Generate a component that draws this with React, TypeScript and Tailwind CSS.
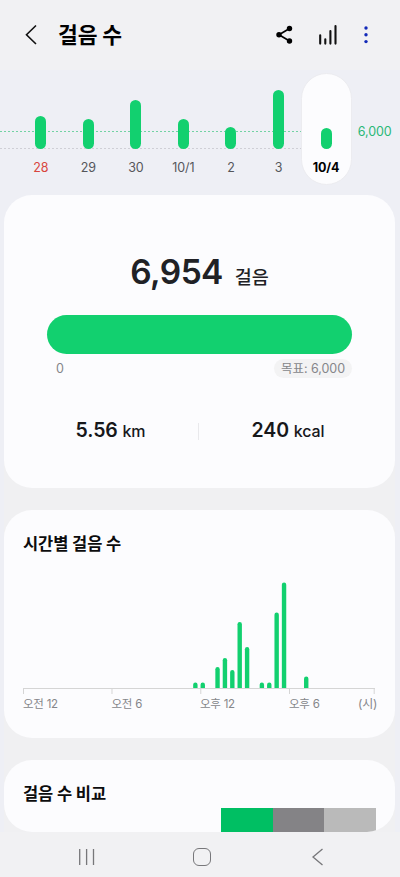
import clsx from "clsx";

const days = [
  { label: "28", height: 33, sunday: true },
  { label: "29", height: 30 },
  { label: "30", height: 49 },
  { label: "10/1", height: 30 },
  { label: "2", height: 22 },
  { label: "3", height: 59 },
  { label: "10/4", height: 21, selected: true },
];

// half-hour slots of the day
const slots = [
  { slot: 23, height: 5.5 },
  { slot: 24, height: 5.5 },
  { slot: 26, height: 21 },
  { slot: 27, height: 30 },
  { slot: 28, height: 18 },
  { slot: 29, height: 66 },
  { slot: 30, height: 41 },
  { slot: 32, height: 5.5 },
  { slot: 33, height: 5.5 },
  { slot: 34, height: 75.5 },
  { slot: 35, height: 105.5 },
  { slot: 38, height: 11.5 },
];

const ticks = [0.5, 89, 177.8, 266.5, 351.2];

function Header() {
  return (
    <header className="flex h-[70px] items-center bg-[#f1f1f3] pr-[31px] pl-[24px]">
      <svg width="14" height="22" viewBox="0 0 14 22" fill="none" stroke="#111" strokeWidth="1.6">
        <path d="M12 1.5 2.5 10.7 12 20" />
      </svg>
      <h1 className="mt-px ml-[20px] text-[21.5px] leading-none font-bold tracking-[-0.1px] text-black">
        걸음 수
      </h1>
      <div className="ml-auto flex items-center">
        <svg width="18" height="20" viewBox="0 0 18 20" fill="#000">
          <path d="M14.5 3.5 4 9.8l10.5 6.2" fill="none" stroke="#000" strokeWidth="1.7" />
          <circle cx="14.5" cy="3.5" r="2.7" />
          <circle cx="4" cy="9.8" r="2.7" />
          <circle cx="14.5" cy="16" r="2.7" />
        </svg>
        <svg
          className="ml-[25px]"
          width="20"
          height="22"
          viewBox="0 0 20 22"
          stroke="#111"
          strokeWidth="2.1"
          strokeLinecap="round"
        >
          <path d="M2.2 11.3v8.3M7.3 15.2v4.4M12.4 7v12.6M17.5 2v17.6" />
        </svg>
        <svg className="ml-[25px]" width="6" height="20" viewBox="0 0 6 20" fill="#1229b8">
          <circle cx="3" cy="3" r="1.7" />
          <circle cx="3" cy="9.8" r="1.7" />
          <circle cx="3" cy="16.6" r="1.7" />
        </svg>
      </div>
    </header>
  );
}

function WeekChart() {
  return (
    <section className="relative flex h-[125px] pt-[3px] pl-[17px]">
      <div className="absolute top-[61px] left-0 h-px w-[302px] bg-[repeating-linear-gradient(90deg,#72d2a4_0_2px,transparent_2px_4px)]" />
      <div className="absolute top-[78px] left-0 h-px w-[302px] bg-[repeating-linear-gradient(90deg,#cfcfd6_0_2px,transparent_2px_4px)]" />
      {days.map((day) => (
        <div key={day.label} className="relative flex h-[112px] w-[47.55px] shrink-0 flex-col items-center">
          {day.selected && (
            <div className="absolute inset-y-0 -right-[2px] -left-[1px] rounded-full border border-[#ececf0] bg-[#fcfcfe]" />
          )}
          <div className="relative flex h-[76px] items-end">
            <div className="w-[11px] rounded-full bg-[#12d06f]" style={{ height: day.height }} />
          </div>
          <p
            className={clsx(
              "relative mt-[11px] text-[12.5px] leading-4 tracking-[-0.1px]",
              day.selected && "font-bold text-black",
              day.sunday && "text-[#d84540]",
              !day.selected && !day.sunday && "text-[#55565b]"
            )}
          >
            {day.label}
          </p>
        </div>
      ))}
      <p className="mt-[51px] ml-[8px] text-[12.5px] leading-4 tracking-[-0.1px] text-[#2ab877]">6,000</p>
    </section>
  );
}

function Summary() {
  return (
    <section className="h-[293px] rounded-[28px] bg-[#fcfcfe] px-[43px] pt-[55px]">
      <div className="flex h-[44px] items-baseline justify-center text-[#202125]">
        <span className="text-[33.5px] leading-[44px] font-semibold tracking-[-0.6px]">6,954</span>
        <span className="ml-[12px] text-[18.5px] leading-none font-medium tracking-[-0.1px]">걸음</span>
      </div>
      <div className="mt-[21px] h-[39px] rounded-full bg-[#12d06f]" />
      <div className="mt-[5px] flex h-[19px] items-center justify-between pl-[9px] text-[12.5px] leading-none text-[#85868a]">
        <span className="pt-[2px]">0</span>
        <span className="flex h-[19px] items-center rounded-full bg-[#f3f3f4] px-[7px] pt-[2px] tracking-[-0.05px]">
          목표: 6,000
        </span>
      </div>
      <div className="mt-[38px] flex h-[30px] items-center text-[#17181b]">
        <p className="w-[151px] pr-[24px] text-center text-[19.5px] leading-none font-semibold tracking-[-0.1px] whitespace-nowrap">
          5.56 <span className="text-[16px] font-medium">km</span>
        </p>
        <div className="h-[17px] w-px bg-[#e9e9ec]" />
        <p className="flex-1 pl-[25px] text-center text-[19.5px] leading-none font-semibold tracking-[-0.1px] whitespace-nowrap">
          240 <span className="text-[16px] font-medium">kcal</span>
        </p>
      </div>
    </section>
  );
}

function HourlySteps() {
  return (
    <section className="h-[228px] rounded-[28px] bg-[#fcfcfe] pt-[22px] pl-[19px]">
      <h2 className="text-[16.5px] leading-6 font-bold tracking-[-0.1px] text-[#0c0c0d]">시간별 걸음 수</h2>
      <svg className="mt-[22px]" width="354" height="116" viewBox="0 0 354 116">
        {slots.map(({ slot, height }) => (
          <path
            key={slot}
            d={`M${slot * 7.39 + 0.2} 110v${2.2 - height}a2.2 2.2 0 0 1 4.4 0v${height - 2.2}z`}
            fill="#12d06f"
          />
        ))}
        <path d="M0 110.5h352" stroke="#d5d5d5" />
        {ticks.map((x) => (
          <path key={x} d={`M${x} 110v6`} stroke="#d5d5d5" />
        ))}
      </svg>
      <div className="mt-[2px] flex text-[11.5px] leading-4 tracking-[-0.25px] text-[#85868a]">
        <span className="w-[88.5px]">오전 12</span>
        <span className="w-[88.5px]">오전 6</span>
        <span className="w-[89px]">오후 12</span>
        <span className="w-[69px]">오후 6</span>
        <span className="text-[12px]">(시)</span>
      </div>
    </section>
  );
}

function Comparison() {
  return (
    <section className="h-[72px] overflow-hidden rounded-[28px] bg-[#fcfcfe] pt-[22px] pl-[19px]">
      <h2 className="text-[16.5px] leading-6 font-bold tracking-[-0.1px] text-[#0c0c0d]">걸음 수 비교</h2>
      <div className="mt-[2px] ml-[198px] flex h-[24px] w-[155px]">
        <div className="flex-1 bg-[#00bf63]" />
        <div className="flex-1 bg-[#848386]" />
        <div className="flex-1 bg-[#bababa]" />
      </div>
    </section>
  );
}

function NavBar() {
  return (
    <nav className="flex h-[45px] items-center bg-[#f1f1f3] pt-[5px] pl-[78px]">
      <svg width="18" height="18" viewBox="0 0 18 18" stroke="#77777a" strokeWidth="1.3">
        <path d="M1.7 1v16M8.6 1v16M15.5 1v16" />
      </svg>
      <div className="ml-[97px] size-[18px] rounded-[6px] border-[1.5px] border-[#77777a]" />
      <svg className="ml-[100px]" width="14" height="18" viewBox="0 0 14 18" fill="none" stroke="#77777a" strokeWidth="1.3">
        <path d="M11.5 1 2 9l9.5 8" />
      </svg>
    </nav>
  );
}

export default function App() {
  return (
    <div className="h-[877px] w-[400px] overflow-hidden bg-[#eeeff5] font-['Inter','Noto_Sans_CJK_KR',sans-serif]">
      <Header />
      <WeekChart />
      <main className="mr-[5px] ml-[4px] flex flex-col gap-[22px] bg-[linear-gradient(#eeeff5_0_40px,#f0f0f2_40px)]">
        <Summary />
        <HourlySteps />
        <Comparison />
      </main>
      <NavBar />
    </div>
  );
}
